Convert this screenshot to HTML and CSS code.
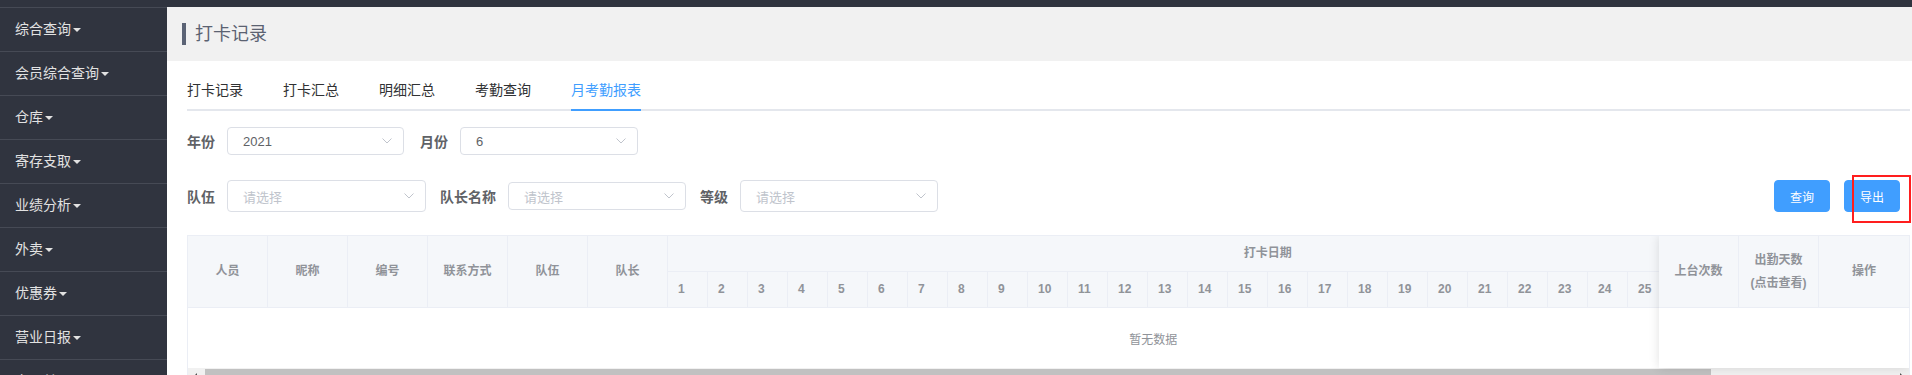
FILE: index.html
```html
<!DOCTYPE html>
<html>
<head>
  <meta charset="utf-8">
  <meta name="viewport" content="width=device-width, initial-scale=1">
  <link rel="stylesheet" href="styles.css">
</head>
<body>

<div class="topbar"></div>

<div class="layout">
  <ul class="sidebar">
    <li>综合查询<span class="caret"></span></li>
    <li>会员综合查询<span class="caret"></span></li>
    <li>仓库<span class="caret"></span></li>
    <li>寄存支取<span class="caret"></span></li>
    <li>业绩分析<span class="caret"></span></li>
    <li>外卖<span class="caret"></span></li>
    <li>优惠券<span class="caret"></span></li>
    <li>营业日报<span class="caret"></span></li>
    <li>交易单<span class="caret"></span></li>
  </ul>

  <div class="main">
    <div class="page-header">
      <h2 class="page-title">打卡记录</h2>
    </div>

    <div class="content">
      <div class="tabs">
        <div class="tab">打卡记录</div>
        <div class="tab">打卡汇总</div>
        <div class="tab">明细汇总</div>
        <div class="tab">考勤查询</div>
        <div class="tab active">月考勤报表</div>
      </div>

      <div class="filter-row row-one">
        <div class="field">
          <label>年份</label>
          <div class="select sel-177">
            <span class="value">2021</span>
            <svg class="arrow" width="10" height="6" viewBox="0 0 10 6"><polyline points="0.5,0.5 5,5 9.5,0.5" fill="none" stroke="#c0c4cc" stroke-width="1"/></svg>
          </div>
        </div>
        <div class="field">
          <label>月份</label>
          <div class="select sel-178">
            <span class="value">6</span>
            <svg class="arrow" width="10" height="6" viewBox="0 0 10 6"><polyline points="0.5,0.5 5,5 9.5,0.5" fill="none" stroke="#c0c4cc" stroke-width="1"/></svg>
          </div>
        </div>
      </div>

      <div class="filter-row row-two">
        <div class="field">
          <label>队伍</label>
          <div class="select sel-199 tall">
            <span class="placeholder">请选择</span>
            <svg class="arrow" width="10" height="6" viewBox="0 0 10 6"><polyline points="0.5,0.5 5,5 9.5,0.5" fill="none" stroke="#c0c4cc" stroke-width="1"/></svg>
          </div>
        </div>
        <div class="field">
          <label>队长名称</label>
          <div class="select sel-178">
            <span class="placeholder">请选择</span>
            <svg class="arrow" width="10" height="6" viewBox="0 0 10 6"><polyline points="0.5,0.5 5,5 9.5,0.5" fill="none" stroke="#c0c4cc" stroke-width="1"/></svg>
          </div>
        </div>
        <div class="field">
          <label>等级</label>
          <div class="select sel-198 tall">
            <span class="placeholder">请选择</span>
            <svg class="arrow" width="10" height="6" viewBox="0 0 10 6"><polyline points="0.5,0.5 5,5 9.5,0.5" fill="none" stroke="#c0c4cc" stroke-width="1"/></svg>
          </div>
        </div>

        <div class="actions">
          <button class="btn">查询</button>
          <button class="btn export">导出<span class="mark"></span></button>
        </div>
      </div>

      <div class="table">
        <div class="table-inner">
          <div class="scroll-pane">
            <table class="grid main-grid">
              <colgroup>
                <col class="c80"><col class="c80"><col class="c80"><col class="c80"><col class="c80"><col class="c80">
                <col class="c40"><col class="c40"><col class="c40"><col class="c40"><col class="c40">
                <col class="c40"><col class="c40"><col class="c40"><col class="c40"><col class="c40">
                <col class="c40"><col class="c40"><col class="c40"><col class="c40"><col class="c40">
                <col class="c40"><col class="c40"><col class="c40"><col class="c40"><col class="c40">
                <col class="c40"><col class="c40"><col class="c40"><col class="c40"><col class="c40">
                <col class="c40"><col class="c40"><col class="c40"><col class="c40"><col class="c40">
                <col class="c80"><col class="c80"><col class="c90">
              </colgroup>
              <thead>
                <tr>
                  <th rowspan="2">人员</th>
                  <th rowspan="2">昵称</th>
                  <th rowspan="2">编号</th>
                  <th rowspan="2">联系方式</th>
                  <th rowspan="2">队伍</th>
                  <th rowspan="2">队长</th>
                  <th colspan="30">打卡日期</th>
                  <th rowspan="2"></th>
                  <th rowspan="2"></th>
                  <th rowspan="2"></th>
                </tr>
                <tr>
                  <th class="day">1</th><th class="day">2</th><th class="day">3</th><th class="day">4</th><th class="day">5</th>
                  <th class="day">6</th><th class="day">7</th><th class="day">8</th><th class="day">9</th><th class="day">10</th>
                  <th class="day">11</th><th class="day">12</th><th class="day">13</th><th class="day">14</th><th class="day">15</th>
                  <th class="day">16</th><th class="day">17</th><th class="day">18</th><th class="day">19</th><th class="day">20</th>
                  <th class="day">21</th><th class="day">22</th><th class="day">23</th><th class="day">24</th><th class="day">25</th>
                  <th class="day"></th><th class="day"></th><th class="day"></th><th class="day"></th><th class="day"></th>
                </tr>
              </thead>
              <tbody>
                <tr><td class="empty" colspan="39">暂无数据</td></tr>
              </tbody>
            </table>
          </div>

          <div class="fixed-pane">
            <table class="grid fixed-grid">
              <colgroup>
                <col class="c80"><col class="c80"><col class="c90">
              </colgroup>
              <thead>
                <tr>
                  <th>上台次数</th>
                  <th>出勤天数<br>(点击查看)</th>
                  <th>操作</th>
                </tr>
              </thead>
              <tbody>
                <tr><td class="blank" colspan="3"></td></tr>
              </tbody>
            </table>
          </div>
        </div>

        <div class="hscroll">
          <span class="scroll-btn left"></span>
          <span class="thumb"></span>
          <span class="track"></span>
          <span class="scroll-btn right"></span>
        </div>
      </div>
    </div>
  </div>
</div>

</body>
</html>
```

FILE: styles.css
```css
html, body {
  margin: 0;
  height: 100%;
  overflow: hidden;
}

body {
  font-family: "Liberation Sans", "Noto Sans CJK SC", sans-serif;
  background-color: #fff;
  color: #606266;
}

.topbar {
  height: 7px;
  background-color: #30343f;
}

.layout {
  display: flex;
  height: calc(100% - 7px);
}

/* sidebar */
.sidebar {
  width: 167px;
  flex: none;
  margin: 0;
  padding: 0;
  list-style: none;
  background-color: #30343f;
  border-top: 1px solid #464a55;
}

.sidebar li {
  height: 43px;
  line-height: 43px;
  padding-left: 15px;
  font-size: 14px;
  color: #e2e2e2;
  border-bottom: 1px solid #464a55;
}

.caret {
  display: inline-block;
  margin-left: 2px;
  vertical-align: middle;
  border-top: 4px solid #e2e2e2;
  border-left: 4px solid transparent;
  border-right: 4px solid transparent;
}

/* main */
.main {
  flex: 1;
  min-width: 0;
}

.page-header {
  height: 54px;
  background-color: #f1f1f1;
  display: flex;
  align-items: center;
  padding-left: 15px;
}

.page-title {
  margin: 0;
  padding-left: 9px;
  border-left: 4px solid #5b6375;
  font-size: 18px;
  font-weight: normal;
  line-height: 22px;
  color: #5b6271;
}

.content {
  padding: 10px 2px 0 20px;
}

/* tabs */
.tabs {
  display: flex;
  border-bottom: 2px solid #e4e7ed;
}

.tab {
  position: relative;
  padding: 1px 20px 0;
  line-height: 37px;
  font-size: 14px;
  color: #303133;
}

.tab:first-child {
  padding-left: 0;
}

.tab.active {
  padding-right: 0;
  color: #409eff;
}

.tab.active::after {
  content: "";
  position: absolute;
  left: 20px;
  right: 0;
  bottom: -2px;
  height: 2px;
  background-color: #409eff;
}

/* filters */
.filter-row {
  display: flex;
  align-items: center;
}

.row-one {
  margin-top: 16px;
  height: 28px;
}

.row-two {
  margin-top: 25px;
  height: 32px;
}

.field {
  display: flex;
  align-items: center;
  margin-right: 16px;
}

.row-two .field {
  margin-right: 14px;
}

.field label {
  padding-right: 12px;
  font-size: 14px;
  font-weight: bold;
  color: #606266;
}

.select {
  display: flex;
  align-items: center;
  justify-content: space-between;
  box-sizing: border-box;
  height: 28px;
  padding: 0 11px 0 15px;
  border: 1px solid #dcdfe6;
  border-radius: 4px;
  background-color: #fff;
  font-size: 13px;
}

.select.tall {
  height: 32px;
}

.sel-177 { width: 177px; }
.sel-178 { width: 178px; }
.sel-198 { width: 198px; }
.sel-199 { width: 199px; }

.select .value {
  color: #606266;
}

.select .placeholder {
  color: #c0c4cc;
}

.actions {
  display: flex;
  gap: 14px;
  margin-left: auto;
  margin-right: 10px;
}

.btn {
  position: relative;
  width: 56px;
  height: 32px;
  padding: 0;
  border: 1px solid #409eff;
  border-radius: 4px;
  background-color: #409eff;
  color: #fff;
  font-family: inherit;
  font-size: 12px;
}

.mark {
  position: absolute;
  left: 7px;
  top: -6px;
  width: 59px;
  height: 48px;
  box-sizing: border-box;
  border: 2.5px solid #ff1e1e;
}

/* table */
.table {
  margin-top: 23px;
  border: 1px solid #ebeef5;
  border-bottom: none;
  overflow: hidden;
}

.table-inner {
  display: flex;
}

.scroll-pane {
  flex: 1;
  min-width: 0;
  overflow: hidden;
}

.fixed-pane {
  position: relative;
  z-index: 1;
  width: 250px;
  flex: none;
  background-color: #fff;
  box-shadow: 0 0 10px rgba(0, 0, 0, 0.12);
}

.grid {
  table-layout: fixed;
  border-collapse: separate;
  border-spacing: 0;
}

.main-grid {
  width: 1930px;
}

.fixed-grid {
  width: 250px;
}

.c40 { width: 40px; }
.c80 { width: 80px; }
.c90 { width: 90px; }

.grid th {
  box-sizing: border-box;
  height: 36px;
  padding: 0;
  background-color: #f5f7fa;
  border-right: 1px solid #ebeef5;
  border-bottom: 1px solid #ebeef5;
  font-size: 12px;
  font-weight: bold;
  line-height: 23px;
  color: #909399;
  text-align: center;
}

.grid th.day {
  padding-left: 10px;
  text-align: left;
}

.fixed-grid th {
  height: 72px;
}

.fixed-grid th:last-child {
  border-right: none;
}

.grid td {
  padding: 0;
}

.empty {
  height: 60px;
  text-align: center;
  font-size: 12px;
  color: #909399;
}

.blank {
  height: 60px;
}

/* horizontal scrollbar */
.hscroll {
  display: flex;
  height: 17px;
  background-color: #f1f1f1;
}

.scroll-btn {
  position: relative;
  width: 17px;
  flex: none;
}

.scroll-btn::before {
  content: "";
  position: absolute;
  top: 5px;
  border-top: 4px solid transparent;
  border-bottom: 4px solid transparent;
}

.scroll-btn.left::before {
  left: 5px;
  border-right: 4px solid #505050;
}

.scroll-btn.right::before {
  right: 5px;
  border-left: 4px solid #505050;
}

.thumb {
  width: 1506px;
  flex: none;
  margin-top: 1px;
  height: 15px;
  background-color: #c1c1c1;
}

.track {
  flex: 1;
}
```
